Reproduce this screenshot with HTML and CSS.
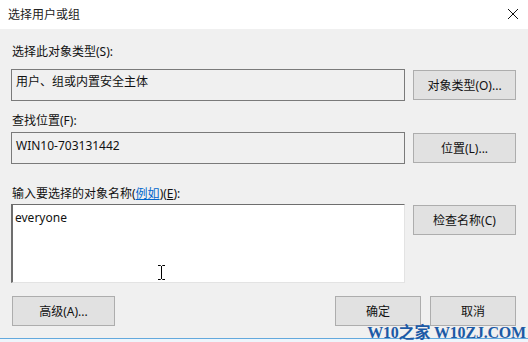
FILE: index.html
```html
<!DOCTYPE html>
<html lang="zh-CN">
<head>
  <meta charset="UTF-8" />
  <meta name="viewport" content="width=device-width, initial-scale=1.0"/>
  <title>选择用户或组</title>
  <link rel="stylesheet" href="styles.css">
</head>
<body>
  <div class="dialog">
    <div class="titlebar">
      <span class="title">选择用户或组</span>
      <svg class="close" width="12" height="12" viewBox="0 0 12 12">
        <path d="M1 1 L11 11 M11 1 L1 11" stroke="#111" stroke-width="1" fill="none"/>
      </svg>
    </div>

    <div class="content">
      <div class="label label-first">选择此对象类型(S):</div>
      <div class="row">
        <div class="field">用户、组或内置安全主体</div>
        <button class="btn btn-side">对象类型(O)...</button>
      </div>

      <div class="label label-second">查找位置(F):</div>
      <div class="row">
        <div class="field field-latin">WIN10-703131442</div>
        <button class="btn btn-side">位置(L)...</button>
      </div>

      <div class="label label-third">输入要选择的对象名称(<a href="#" class="link">例如</a>)(<u>E</u>):</div>
      <div class="row">
        <div class="names">everyone</div>
        <button class="btn btn-side">检查名称(C)</button>
      </div>

      <div class="footer">
        <button class="btn btn-wide">高级(A)...</button>
        <div class="footer-right">
          <button class="btn btn-small">确定</button>
          <button class="btn btn-small">取消</button>
        </div>
      </div>
    </div>

    <div class="taskbar"></div>

    <svg class="ibeam" width="9" height="15" viewBox="0 0 9 15">
      <path d="M1 0.5 H3.5 M5.5 0.5 H8 M4.5 1 V14 M1 14.5 H3.5 M5.5 14.5 H8 M3.5 0.5 L4.5 1.5 L5.5 0.5 M3.5 14.5 L4.5 13.5 L5.5 14.5" stroke="#000" stroke-width="1" fill="none"/>
    </svg>

    <div class="watermark">W10之家 W10ZJ.COM</div>
  </div>
</body>
</html>
```

FILE: styles.css
```css
body {
  margin: 0;
  padding: 0;
  background: #f0f0f0;
  font-family: "Noto Sans", "Noto Sans CJK SC", sans-serif;
  font-size: 12px;
  color: #111;
}

.dialog {
  position: relative;
  width: 528px;
  height: 342px;
  overflow: hidden;
  background: #f0f0f0;
}

.titlebar {
  height: 29px;
  background: #fff;
  display: flex;
  align-items: center;
  justify-content: space-between;
  padding: 0 9px 0 8px;
}

.title {
  font-size: 12px;
  color: #222;
  margin-top: -1px;
}

.close {
  margin-top: -2px;
}

.content {
  padding: 0 12px 0 11px;
}

.label {
  height: 16px;
  line-height: 16px;
  padding-left: 1px;
}

.label-first {
  margin-top: 15px;
  margin-bottom: 9px;
}

.label-second {
  margin-top: 12px;
  margin-bottom: 3px;
}

.label-third {
  margin-top: 22px;
  margin-bottom: 2px;
}

.link {
  color: #0066cc;
  text-decoration: underline;
}

.row {
  display: flex;
  gap: 8px;
  align-items: flex-start;
}

.field {
  width: 394px;
  height: 32px;
  box-sizing: border-box;
  border: 1px solid #7a7a7a;
  padding: 4px 4px 0;
  line-height: 16px;
}

.field-latin {
  padding-top: 5px;
}

.names {
  width: 394px;
  height: 79px;
  box-sizing: border-box;
  background: #fff;
  border-top: 1px solid #6e6e6e;
  border-left: 2px solid #6e6e6e;
  border-right: 1px solid #e3e3e3;
  border-bottom: 1px solid #e3e3e3;
  padding: 5px 2px 0;
  line-height: 16px;
}

.btn {
  font-family: "Noto Sans", "Noto Sans CJK SC", sans-serif;
  font-size: 12px;
  color: #111;
  background: #e1e1e1;
  border: 1px solid #adadad;
  height: 30px;
  padding: 0;
  box-sizing: border-box;
}

.btn-side {
  width: 103px;
  margin-top: 1px;
}

.footer {
  display: flex;
  justify-content: space-between;
  margin-top: 13px;
  padding-left: 1px;
}

.btn-wide {
  width: 103px;
}

.footer-right {
  display: flex;
  gap: 9px;
}

.btn-small {
  width: 86px;
}

.taskbar {
  position: absolute;
  left: 0;
  right: 0;
  bottom: 0;
  height: 3px;
  border-top: 1px solid #63a9dd;
  background: #eef5fb;
}

.ibeam {
  position: absolute;
  left: 157px;
  top: 265px;
}

.watermark {
  position: absolute;
  right: 2px;
  bottom: -1px;
  font-family: "Liberation Serif", "Noto Sans CJK SC", serif;
  font-weight: bold;
  font-size: 16px;
  color: #1c5aa6;
  letter-spacing: -0.2px;
}
```
